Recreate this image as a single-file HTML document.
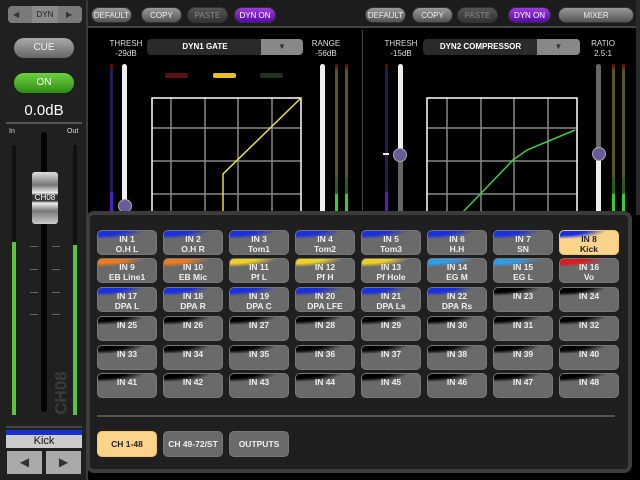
<!DOCTYPE html>
<html><head><meta charset="utf-8"><style>
*{margin:0;padding:0;box-sizing:border-box}
body{width:640px;height:480px;background:#000;position:relative;overflow:hidden;font-family:"Liberation Sans",sans-serif;color:#fff}
.a{position:absolute}
.pill{position:absolute;height:16px;border-radius:8px;background:linear-gradient(#9a9a9a,#555);font-size:8px;color:#eee;text-align:center;line-height:16px;border:1px solid #333}
.paste{background:linear-gradient(#555,#333);color:#888}
.dyn{background:linear-gradient(#9c3be0,#5a0aa8);color:#fff}
.b{position:absolute;width:60px;height:25px;border-radius:5px;background:#6a6a6a;font-size:8.5px;font-weight:bold;color:#eee;text-align:center;line-height:10px;padding-top:3px;overflow:hidden;border:1px solid #777}
.b i{position:absolute;left:-1px;top:-1px;width:48px;height:14px;}
.b span{position:relative}
.sel{background:#fcd38a;color:#222;border-color:#f5c56a}
.lbl{font-size:8px;color:#ddd;text-align:center}
</style></head><body>
<!-- left panel -->
<div class="a" style="left:0;top:0;width:88px;height:480px;background:#202020;border-right:2px solid #3a3a3a"></div>
<div class="a" style="left:8px;top:6px;width:74px;height:17px;border-radius:4px;background:#7a7a7a"></div>
<div class="a" style="left:32px;top:6px;width:26px;height:17px;background:#8a8a8a;font-size:8px;color:#222;text-align:center;line-height:17px">DYN</div>
<div class="a" style="left:13px;top:10px;font-size:8px;color:#333">◀</div>
<div class="a" style="left:66px;top:10px;font-size:8px;color:#333">▶</div>
<div class="a" style="left:14px;top:38px;width:60px;height:20px;border-radius:10px;background:linear-gradient(#aaa,#666);font-size:10px;text-align:center;line-height:20px;color:#eee">CUE</div>
<div class="a" style="left:14px;top:73px;width:60px;height:20px;border-radius:10px;background:linear-gradient(#6fd040,#2f8c15);font-size:10px;text-align:center;line-height:20px;color:#fff">ON</div>
<div class="a" style="left:0;top:102px;width:88px;font-size:15px;text-align:center;color:#fff">0.0dB</div>
<div class="a" style="left:6px;top:122px;width:76px;height:2px;background:#555"></div>
<div class="a" style="left:9px;top:128px;font-size:7px;color:#ddd">In</div>
<div class="a" style="left:67px;top:128px;font-size:7px;color:#ddd">Out</div>
<div class="a" style="left:12px;top:145px;width:4px;height:270px;background:#111"></div>
<div class="a" style="left:73px;top:145px;width:4px;height:270px;background:#111"></div>
<div class="a" style="left:12px;top:242px;width:4px;height:173px;background:#5bc43a"></div>
<div class="a" style="left:73px;top:245px;width:4px;height:170px;background:#5bc43a"></div>
<div class="a" style="left:41px;top:132px;width:6px;height:280px;background:#050505;border-radius:3px"></div>
<div class="a" style="left:32px;top:172px;width:26px;height:52px;border-radius:3px;background:linear-gradient(#ddd,#777 25%,#eee 40%,#333 45%,#333 55%,#eee 60%,#777 75%,#ccc);font-size:8px;color:#fff;text-align:center;line-height:52px">CH08</div>
<div class="a" style="left:30px;top:246px;width:30px;height:1px;border-left:8px solid #666;border-right:8px solid #666"></div>
<div class="a" style="left:30px;top:269px;width:30px;height:1px;border-left:8px solid #666;border-right:8px solid #666"></div>
<div class="a" style="left:30px;top:292px;width:30px;height:1px;border-left:8px solid #666;border-right:8px solid #666"></div>
<div class="a" style="left:30px;top:314px;width:30px;height:1px;border-left:8px solid #666;border-right:8px solid #666"></div>
<div class="a" style="left:40px;top:383px;transform:rotate(-90deg);font-size:17px;font-weight:bold;color:#3a3a3a">CH08</div>
<div class="a" style="left:6px;top:426px;width:76px;height:2px;background:#444"></div>
<div class="a" style="left:6px;top:430px;width:76px;height:5px;background:#1a2fd0"></div>
<div class="a" style="left:6px;top:435px;width:76px;height:13px;background:#ccc;color:#111;font-size:11px;text-align:center;line-height:13px">Kick</div>
<div class="a" style="left:7px;top:451px;width:35px;height:23px;background:#aaa;font-size:12px;color:#333;text-align:center;line-height:23px">◀</div>
<div class="a" style="left:46px;top:451px;width:35px;height:23px;background:#aaa;font-size:12px;color:#333;text-align:center;line-height:23px">▶</div>
<!-- top bar -->
<div class="a" style="left:88px;top:0;width:552px;height:28px;background:#1c1c1c;border-bottom:2px solid #444"></div>
<div class="pill" style="left:91px;top:7px;width:41px">DEFAULT</div>
<div class="pill" style="left:141px;top:7px;width:41px">COPY</div>
<div class="pill paste" style="left:187px;top:7px;width:41px">PASTE</div>
<div class="pill dyn" style="left:234px;top:7px;width:42px">DYN ON</div>
<div class="pill" style="left:365px;top:7px;width:41px">DEFAULT</div>
<div class="pill" style="left:412px;top:7px;width:41px">COPY</div>
<div class="pill paste" style="left:457px;top:7px;width:41px">PASTE</div>
<div class="pill dyn" style="left:508px;top:7px;width:43px">DYN ON</div>
<div class="pill" style="left:558px;top:7px;width:76px">MIXER</div>
<div class="a" style="left:362px;top:30px;width:1px;height:185px;background:#444"></div>
<div class="a" style="left:636px;top:0;width:4px;height:215px;background:#2a2a2a"></div>
<!-- dyn1 -->
<div class="a lbl" style="left:106px;top:39px;width:40px;line-height:10px">THRESH<br>-29dB</div>
<div class="a" style="left:147px;top:39px;width:156px;height:16px;border-radius:4px;background:#2a2a2a;font-size:8px;font-weight:bold;text-align:center;line-height:16px;padding-right:40px">DYN1 GATE</div>
<div class="a" style="left:261px;top:39px;width:42px;height:16px;border-radius:0 4px 4px 0;background:#888;font-size:8px;color:#333;text-align:center;line-height:16px">▼</div>
<div class="a lbl" style="left:307px;top:39px;width:38px;line-height:10px">RANGE<br>-56dB</div>
<div class="a" style="left:165px;top:73px;width:23px;height:5px;background:#5a1010;border-radius:2px"></div>
<div class="a" style="left:213px;top:73px;width:23px;height:5px;background:#e8c020;border-radius:2px"></div>
<div class="a" style="left:260px;top:73px;width:23px;height:5px;background:#1f3318;border-radius:2px"></div>
<div class="a" style="left:110px;top:64px;width:3px;height:150px;background:linear-gradient(#600,#2a1a50 5%,#2a1a50 85%,#5020c0 86%)"></div>
<div class="a" style="left:122px;top:64px;width:5px;height:150px;background:#eee;border-radius:3px"></div>
<div class="a" style="left:118px;top:199px;width:14px;height:14px;border-radius:50%;background:#6a5a9a;border:1px solid #aaa"></div>
<div class="a" style="left:320px;top:64px;width:5px;height:150px;background:#eee;border-radius:3px"></div>
<div class="a" style="left:335px;top:64px;width:3px;height:150px;background:linear-gradient(#600,#5a5a20 5%,#5a5a20 75%,#2a5a20 76%,#2a5a20 86%,#2fd02f 87%)"></div>
<div class="a" style="left:345px;top:64px;width:3px;height:150px;background:linear-gradient(#600,#5a5a20 5%,#5a5a20 75%,#2a5a20 76%,#2a5a20 86%,#2fd02f 87%)"></div>
<!-- dyn2 -->
<div class="a lbl" style="left:381px;top:39px;width:40px;line-height:10px">THRESH<br>-15dB</div>
<div class="a" style="left:423px;top:39px;width:157px;height:16px;border-radius:4px;background:#2a2a2a;font-size:8px;font-weight:bold;text-align:center;line-height:16px;padding-right:42px">DYN2 COMPRESSOR</div>
<div class="a" style="left:537px;top:39px;width:43px;height:16px;border-radius:0 4px 4px 0;background:#888;font-size:8px;color:#333;text-align:center;line-height:16px">▼</div>
<div class="a lbl" style="left:584px;top:39px;width:38px;line-height:10px">RATIO<br>2.5:1</div>
<div class="a" style="left:385px;top:64px;width:3px;height:150px;background:linear-gradient(#600,#2a1a50 5%,#2a1a50 85%,#5020c0 86%)"></div>
<div class="a" style="left:383px;top:153px;width:6px;height:2px;background:#eee"></div>
<div class="a" style="left:398px;top:64px;width:5px;height:150px;background:linear-gradient(#eee 60%,#666 60%);border-radius:3px"></div>
<div class="a" style="left:393px;top:148px;width:14px;height:14px;border-radius:50%;background:#6a5a9a;border:1px solid #aaa"></div>
<div class="a" style="left:596px;top:64px;width:5px;height:150px;background:linear-gradient(#666 60%,#eee 60%);border-radius:3px"></div>
<div class="a" style="left:592px;top:147px;width:14px;height:14px;border-radius:50%;background:#6a5a9a;border:1px solid #aaa"></div>
<div class="a" style="left:612px;top:64px;width:3px;height:150px;background:linear-gradient(#600,#5a5a20 5%,#5a5a20 75%,#2a5a20 76%,#2a5a20 86%,#2fd02f 87%)"></div>
<div class="a" style="left:622px;top:64px;width:3px;height:150px;background:linear-gradient(#600,#5a5a20 5%,#5a5a20 75%,#2a5a20 76%,#2a5a20 86%,#2fd02f 87%)"></div>
<svg class="a" style="left:0;top:0" width="640" height="215">
<g stroke="#888" stroke-width="1.5" fill="none">
<path d="M171 98V215M205 98V215M238 98V215M272 98V215M152 128H301M152 161H301M152 194H301"/>
<path d="M447 98V215M481 98V215M514 98V215M548 98V215M427 128H577M427 161H577M427 194H577"/>
</g>
<path d="M152 215V98H301V215M427 215V98H577V215" stroke="#fff" stroke-width="1.5" fill="none"/>
<path d="M223 215V174L301 98" stroke="#e8e040" stroke-width="1.5" fill="none"/>
<path d="M462 213L513 160L527 150L575 130" stroke="#3ed03e" stroke-width="1.5" fill="none"/>
</svg>
<!-- popup -->
<div class="a" style="left:86px;top:211px;width:546px;height:262px;border-radius:8px;background:#1f1f1f;border:4px solid #3c3c3c"></div>
<div class="a" style="left:97px;top:415px;width:518px;height:2px;background:#555"></div>
<div id="g"></div>
<div class="b sel" style="left:97px;top:431px;height:26px;line-height:18px">CH 1-48</div>
<div class="b" style="left:163px;top:431px;height:26px;line-height:18px">CH 49-72/ST</div>
<div class="b" style="left:229px;top:431px;height:26px;line-height:18px">OUTPUTS</div>
<script>
var n=["O.H L","O.H R","Tom1","Tom2","Tom3","H.H","SN","Kick","EB Line1","EB Mic","Pf L","Pf H","Pf Hole","EG M","EG L","Vo","DPA L","DPA R","DPA C","DPA LFE","DPA Ls","DPA Rs"];
var c=["#1a2fe0","#1a2fe0","#1a2fe0","#1a2fe0","#1a2fe0","#1a2fe0","#1a2fe0","#1a2fe0","#f07a1a","#f07a1a","#f0d020","#f0d020","#f0d020","#2a9ff0","#2a9ff0","#e01a1a","#1a2fe0","#1a2fe0","#1a2fe0","#1a2fe0","#1a2fe0","#1a2fe0"];
var ys=[230,258,287,316,345,373],h="";
for(var i=0;i<48;i++){var r=Math.floor(i/8),k=i%8;var x=97+k*66;var col=i<22?c[i]:'#000';
h+='<div class="b'+(i==7?' sel':'')+'" style="left:'+x+'px;top:'+ys[r]+'px"><i style="background:radial-gradient(ellipse 48px 9px at 0 0,'+col+' 60%,transparent 100%)"></i><span>IN '+(i+1)+(i<22?'<br>'+n[i]:'')+'</span></div>';}
document.getElementById('g').outerHTML=h;
</script>
</body></html>
